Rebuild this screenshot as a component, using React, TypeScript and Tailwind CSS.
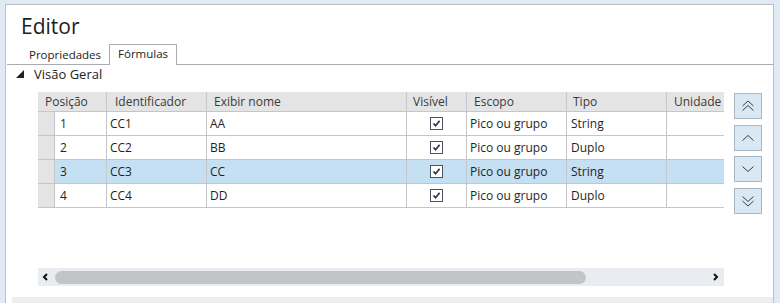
const font = { fontFamily: '"Open Sans", "Noto Sans", sans-serif' };

type Row = { pos: string; id: string; name: string; scope: string; type: string };

const rows: Row[] = [
  { pos: "1", id: "CC1", name: "AA", scope: "Pico ou grupo", type: "String" },
  { pos: "2", id: "CC2", name: "BB", scope: "Pico ou grupo", type: "Duplo" },
  { pos: "3", id: "CC3", name: "CC", scope: "Pico ou grupo", type: "String" },
  { pos: "4", id: "CC4", name: "DD", scope: "Pico ou grupo", type: "Duplo" },
];

const CheckBox = () => (
  <div className="w-[13px] h-[13px] border border-[#4b5063] bg-white flex items-center justify-center">
    <svg width="9" height="9" viewBox="0 0 9 9">
      <path d="M1.5 4.5 L3.6 6.8 L7.6 1.8" fill="none" stroke="#2f3340" strokeWidth="1.7" />
    </svg>
  </div>
);

const Chevron = ({ dir, double }: { dir: "up" | "down"; double?: boolean }) => {
  const up = dir === "up";
  return (
    <svg width="14" height="14" viewBox="0 0 14 14" fill="none" stroke="#3c3f46" strokeWidth="1">
      {double ? (
        up ? (
          <>
            <path d="M1.5 7 L7 2 L12.5 7" />
            <path d="M1.5 11.5 L7 6.5 L12.5 11.5" />
          </>
        ) : (
          <>
            <path d="M1.5 2.5 L7 7.5 L12.5 2.5" />
            <path d="M1.5 7 L7 12 L12.5 7" />
          </>
        )
      ) : up ? (
        <path d="M1.5 9.5 L7 4.5 L12.5 9.5" />
      ) : (
        <path d="M1.5 4.5 L7 9.5 L12.5 4.5" />
      )}
    </svg>
  );
};

const MoveButton = ({ children }: { children: React.ReactNode }) => (
  <button className="w-[28px] h-[26px] bg-[#d8e8f5] border border-[#a8b5c2] flex items-center justify-center">
    {children}
  </button>
);

export default function App() {
  return (
    <div className="w-[780px] h-[303px] bg-[#dfeaf4] pt-[4px] pl-[5px] overflow-hidden" style={font}>
      <div className="w-[769px] h-[299px] bg-white border-l border-t border-r border-[#bcc0c5] flex flex-col">
        {/* Title */}
        <div className="h-[39px] pl-[15px] pt-[6px] text-[21px] leading-[30px] text-[#1e1e1e]">Editor</div>

        {/* Tabs */}
        <div className="h-[21px] ml-[1px] border-b border-[#a9adb3] flex items-end pl-[15px] text-[11.5px] text-[#222]">
          <div className="h-[20px] pl-[7px] pr-[8px] leading-[20px] pt-[1px]">Propriedades</div>
          <div className="h-[21px] -mb-px px-[8px] bg-white border-t border-l border-r border-[#a9adb3] leading-[18px]">
            Fórmulas
          </div>
        </div>

        {/* Tree header */}
        <div className="h-[28px] flex items-start pl-[10px] pt-[1px]">
          <svg width="8" height="8" viewBox="0 0 8 8" className="mt-[4px]">
            <path d="M8 0 L8 8 L0 8 Z" fill="#222" />
          </svg>
          <span className="ml-[10px] text-[13px] leading-[16px] text-[#222]">Visão Geral</span>
        </div>

        {/* Grid + buttons */}
        <div className="flex pl-[32px]">
          <div className="w-[686px] h-[194px] flex flex-col">
            <div className="h-[176px] overflow-hidden text-[12px]">
              <div className="w-[900px]">
                {/* Header */}
                <div className="flex h-[20px] bg-[#e4e4e4] border-b border-[#c3c7cd] text-[#3a3a3a] leading-[19px]">
                  <div className="w-[69px] border-r border-[#c3c7cd] pl-[7px]">Posição</div>
                  <div className="w-[100px] border-r border-[#c3c7cd] pl-[8px]">Identificador</div>
                  <div className="w-[200px] border-r border-[#c3c7cd] pl-[7px]">Exibir nome</div>
                  <div className="w-[60px] border-r border-[#c3c7cd] pl-[6px]">Visível</div>
                  <div className="w-[100px] border-r border-[#c3c7cd] pl-[7px]">Escopo</div>
                  <div className="w-[100px] border-r border-[#c3c7cd] pl-[6px]">Tipo</div>
                  <div className="w-[100px] border-r border-[#c3c7cd] pl-[7px]">Unidade</div>
                </div>
                {/* Rows */}
                {rows.map((r, i) => (
                  <div
                    key={r.pos}
                    className={`flex h-[24px] border-b border-[#c3c7cd] text-[#1f1f1f] leading-[23px] ${
                      i === 2 ? "bg-[#c5e0f3]" : "bg-white"
                    }`}
                  >
                    <div className="w-[17px] bg-[#e4e4e4] border-r border-[#c3c7cd]" />
                    <div className="w-[52px] border-r border-[#c3c7cd] pl-[5px]">{r.pos}</div>
                    <div className="w-[100px] border-r border-[#c3c7cd] pl-[3px]">{r.id}</div>
                    <div className="w-[200px] border-r border-[#c3c7cd] pl-[3px]">{r.name}</div>
                    <div className="w-[60px] border-r border-[#c3c7cd] flex items-center justify-center">
                      <CheckBox />
                    </div>
                    <div className="w-[100px] border-r border-[#c3c7cd] pl-[3px]">{r.scope}</div>
                    <div className="w-[100px] border-r border-[#c3c7cd] pl-[4px]">{r.type}</div>
                    <div className="w-[100px] border-r border-[#c3c7cd]" />
                  </div>
                ))}
              </div>
            </div>
            {/* Horizontal scrollbar */}
            <div className="h-[18px] bg-[#e9edf1] flex items-center">
              <svg width="17" height="18" viewBox="0 0 17 18">
                <path d="M9 6 L6 9 L9 12" fill="none" stroke="#111" strokeWidth="2" />
              </svg>
              <div className="w-[531px] h-[13px] rounded-full bg-[#c2c5c8]" />
              <div className="flex-1" />
              <svg width="17" height="18" viewBox="0 0 17 18">
                <path d="M7 6 L10 9 L7 12" fill="none" stroke="#111" strokeWidth="2" />
              </svg>
            </div>
          </div>
          <div className="ml-[10px] flex flex-col gap-[5px] pt-[1px]">
            <MoveButton>
              <Chevron dir="up" double />
            </MoveButton>
            <div className="mt-[1px]">
              <MoveButton>
                <Chevron dir="up" />
              </MoveButton>
            </div>
            <MoveButton>
              <Chevron dir="down" />
            </MoveButton>
            <div className="mt-[1px]">
              <MoveButton>
                <Chevron dir="down" double />
              </MoveButton>
            </div>
          </div>
        </div>

        {/* Bottom band */}
        <div className="mt-[11px] ml-[6px] h-[6px] bg-[#ededed]" />
      </div>
    </div>
  );
}
